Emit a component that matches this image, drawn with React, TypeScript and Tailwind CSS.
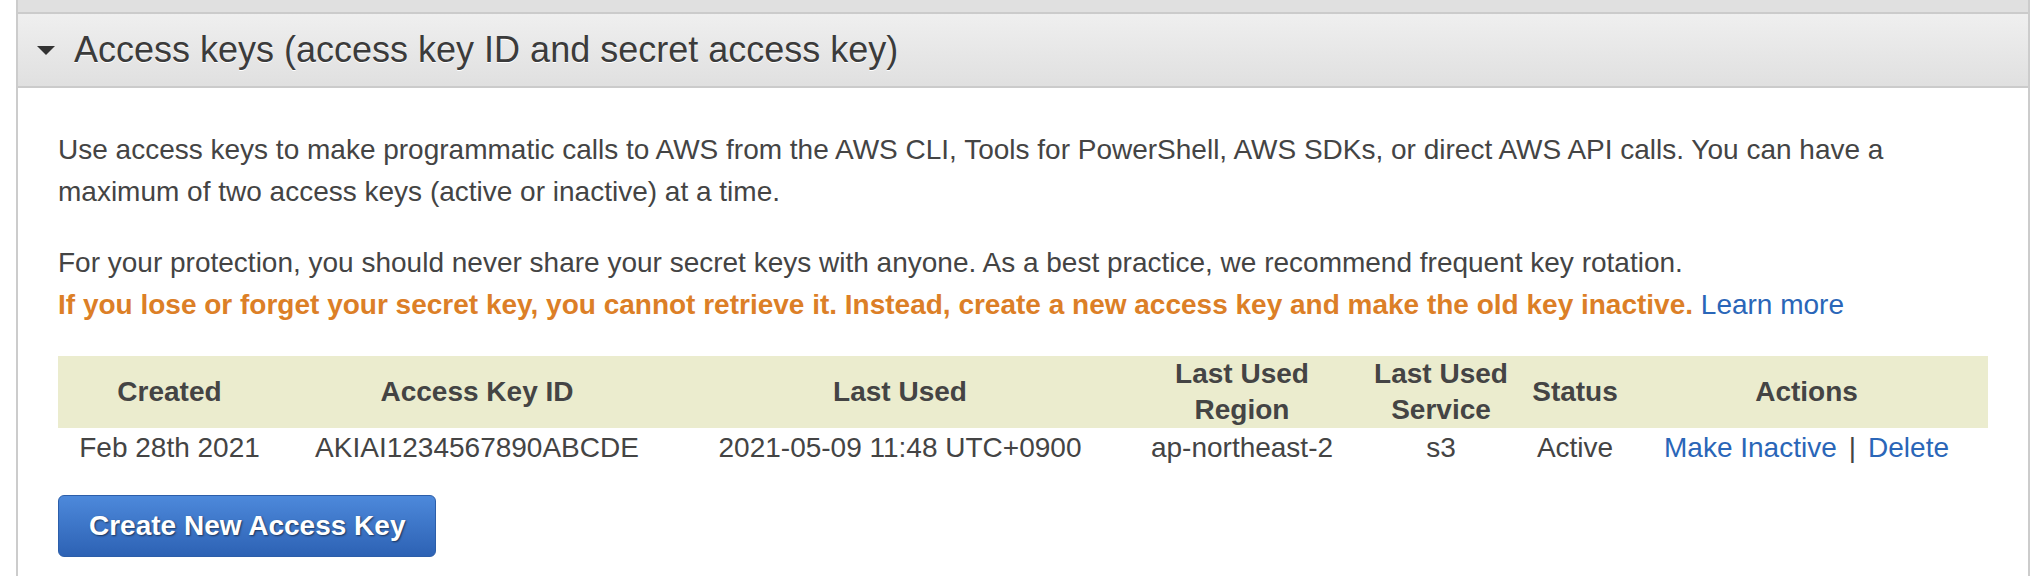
import React from 'react';

const keys = [
  {
    created: 'Feb 28th 2021',
    id: 'AKIAI1234567890ABCDE',
    lastUsed: '2021-05-09 11:48 UTC+0900',
    region: 'ap-northeast-2',
    service: 's3',
    status: 'Active',
  },
];

const App: React.FC = () => {
  return (
    <div className="min-h-[576px] bg-white font-['Liberation_Sans',Arial,sans-serif] text-[#444]">
      <div className="ml-[16px] w-[2014px] min-h-[576px] border-x-2 border-[#cccccc]">
        {/* previous section edge */}
        <div className="h-[14px] bg-[#e0e0e0] border-b-2 border-[#cbcbcb]"></div>

        {/* Section header */}
        <div className="h-[74px] flex items-center pl-[19px] bg-linear-to-b from-[#efefef] to-[#e0e0e0] border-b-2 border-[#cbcbcb]">
          <svg width="18" height="9" viewBox="0 0 18 9" className="shrink-0">
            <polygon points="0,0 18,0 9,9" fill="#333" />
          </svg>
          <h2 className="ml-[19px] text-[36px] leading-[44px] text-[#3b3b3b] [text-shadow:0_1px_0_#fff]">
            Access keys (access key ID and secret access key)
          </h2>
        </div>

        {/* Body */}
        <div className="px-[40px] pt-[41px]">
          <p className="text-[28px] leading-[42px]">
            Use access keys to make programmatic calls to AWS from the AWS CLI, Tools for PowerShell, AWS SDKs, or direct AWS API calls. You can have a maximum of two access keys (active or inactive) at a time.
          </p>
          <p className="mt-[29px] text-[28px] leading-[42px]">
            For your protection, you should never share your secret keys with anyone. As a best practice, we recommend frequent key rotation.
            <br />
            <span className="font-bold text-[#dc7f27]">
              If you lose or forget your secret key, you cannot retrieve it. Instead, create a new access key and make the old key inactive.
            </span>{' '}
            <a className="text-[#2a66b8]">Learn more</a>
          </p>

          <table className="mt-[30px] w-[1930px] table-fixed border-collapse text-[28px]">
            <colgroup>
              <col className="w-[223px]" />
              <col className="w-[392px]" />
              <col className="w-[454px]" />
              <col className="w-[230px]" />
              <col className="w-[168px]" />
              <col className="w-[100px]" />
              <col />
            </colgroup>
            <thead>
              <tr className="bg-[#ebecce] h-[72px]">
                <th className="px-2 font-bold leading-[36px] text-center">Created</th>
                <th className="px-2 font-bold leading-[36px] text-center">Access Key ID</th>
                <th className="px-2 font-bold leading-[36px] text-center">Last Used</th>
                <th className="px-2 font-bold leading-[36px] text-center">Last Used Region</th>
                <th className="px-2 font-bold leading-[36px] text-center">Last Used Service</th>
                <th className="px-1 font-bold leading-[36px] text-center">Status</th>
                <th className="px-2 font-bold leading-[36px] text-center">Actions</th>
              </tr>
            </thead>
            <tbody>
              {keys.map((k) => (
                <tr key={k.id} className="h-[40px]">
                  <td className="px-2 leading-[36px] text-center">{k.created}</td>
                  <td className="px-2 leading-[36px] text-center">{k.id}</td>
                  <td className="px-2 leading-[36px] text-center">{k.lastUsed}</td>
                  <td className="px-2 leading-[36px] text-center">{k.region}</td>
                  <td className="px-2 leading-[36px] text-center">{k.service}</td>
                  <td className="px-1 leading-[36px] text-center">{k.status}</td>
                  <td className="px-2 leading-[36px] text-center whitespace-nowrap">
                    <a className="text-[#2a66b8]">Make Inactive</a>
                    <span className="px-[12px]">|</span>
                    <a className="text-[#2a66b8]">Delete</a>
                  </td>
                </tr>
              ))}
            </tbody>
          </table>

          <button className="mt-[27px] h-[62px] px-[30px] rounded-[6px] border border-[#2c5ea9] bg-linear-to-b from-[#4d89db] to-[#2d62b4] text-white text-[28px] font-bold [text-shadow:1px_1px_2px_rgba(0,0,0,0.55)]">
            Create New Access Key
          </button>
        </div>
      </div>
    </div>
  );
};

export default App;
